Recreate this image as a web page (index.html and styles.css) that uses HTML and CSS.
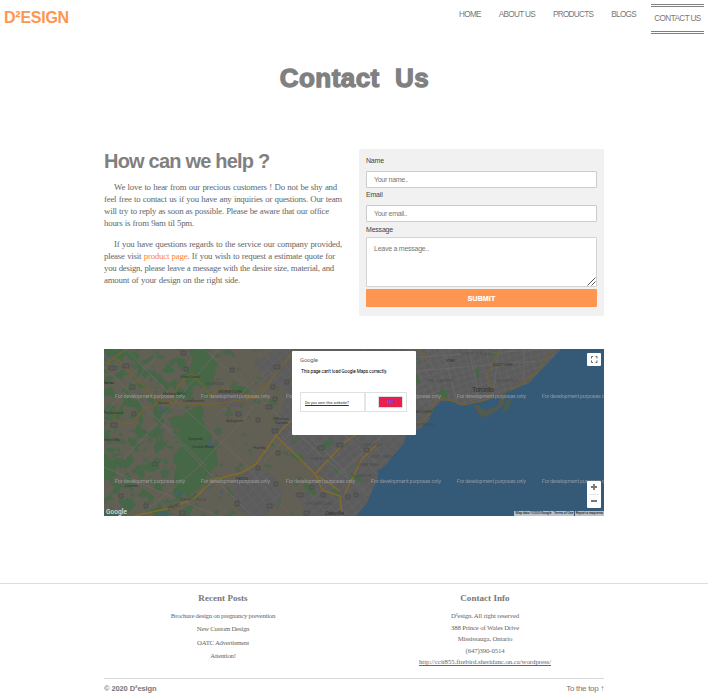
FILE: index.html
```html
<!DOCTYPE html>
<html lang="en">
<head>
<meta charset="utf-8">
<title>Contact Us</title>
<link rel="stylesheet" href="styles.css">
</head>
<body>
<header class="site-header">
  <a class="logo">D²ESIGN</a>
  <nav class="nav">
    <a>HOME</a><a>ABOUT US</a><a>PRODUCTS</a><a>BLOGS</a><a class="active">CONTACT US</a>
  </nav>
</header>
<h1 class="page-title">Contact&nbsp; Us</h1>
<main class="container">
  <section class="contact">
    <div class="intro">
      <h2>How can we help ?</h2>
      <p><span class="l1">We love to hear from our precious customers ! Do not be shy and</span><span class="l2">feel free to contact us if you have any inquiries or questions. Our team</span><span class="l3">will try to reply as soon as possible. Please be aware that our office</span><span class="l4">hours is from 9am til 5pm.</span></p>
      <p><span class="l5">If you have questions regards to the service our company provided,</span><span class="l6">please visit <a>product page</a>. If you wish to request a estimate quote for</span><span class="l7">you design, please leave a message with the desire size, material, and</span><span class="l8">amount of your design on the right side.</span></p>
    </div>
    <form class="form">
      <label for="name">Name</label>
      <input id="name" type="text" placeholder="Your name..">
      <label for="email">Email</label>
      <input id="email" type="text" placeholder="Your email..">
      <label for="message" class="last">Message</label>
      <div class="area">
        <textarea id="message" placeholder="Leave a message.."></textarea>
        <svg class="grip" viewBox="0 0 9 9"><path d="M.5 8.500l8-8M4.500 8.500l4-4" stroke="#555" fill="none"/></svg>
      </div>
      <button type="button">SUBMIT</button>
    </form>
  </section>
  <section class="map">
    <svg class="tiles" width="500" height="167" viewBox="0 0 500 167">
      <defs>
        <filter id="woods" x="0" y="0" width="100%" height="100%" color-interpolation-filters="sRGB">
          <feTurbulence type="fractalNoise" baseFrequency=".1" numOctaves="3" seed="8"/>
          <feColorMatrix values="0 0 0 0 .275  0 0 0 0 .405  0 0 0 0 .28  12 0 0 0 -6" result="n"/>
          <feComposite in="n" in2="SourceAlpha" operator="in"/>
        </filter>
        <filter id="sparse" x="0" y="0" width="100%" height="100%" color-interpolation-filters="sRGB">
          <feTurbulence type="fractalNoise" baseFrequency=".1" numOctaves="3" seed="21"/>
          <feColorMatrix values="0 0 0 0 .29  0 0 0 0 .39  0 0 0 0 .29  12 0 0 0 -7.700" result="n"/>
          <feComposite in="n" in2="SourceAlpha" operator="in"/>
        </filter>
        <pattern id="grid" width="8" height="7" patternUnits="userSpaceOnUse" patternTransform="rotate(-40)"><path d="M0 0H8M0 0V7" stroke="#6b6b6c" stroke-width=".6" fill="none"/></pattern>
        <pattern id="city" width="7" height="6" patternUnits="userSpaceOnUse" patternTransform="rotate(-17)"><path d="M0 0H7M0 0V6" stroke="#6e6e6f" stroke-width=".6" fill="none"/></pattern>
      </defs>
      <rect width="500" height="167" fill="#625f55"/>
      <path d="M0 0H120L108 40 98 70 110 90 115 120 96 150 85 167H0z" filter="url(#woods)"/>
      <path d="M105 0H350V167H80z" filter="url(#sparse)"/>
      <g fill="#5d5c5d">
        <path d="M152 14L172 0H460V167H205L195 150 213 129 187 102 168 84 177 62 183 38 162 34z"/>
        <path d="M130 129l19-9 20 5 10 22-18 20h-19l-12-18zM112 45l18-5 13 10-9 8-20-2z"/>
      </g>
      <path d="M152 14L172 0H350L290 167H205L195 150 213 129 187 102 168 84 177 62 183 38 162 34zM130 129l19-9 20 5 10 22-18 20h-19l-12-18z" fill="url(#grid)"/>
      <path d="M300 0h175l-50 45-80 15-45-5z" fill="url(#city)"/>
      <g fill="#466847">
        <path d="M80 64l12-5 5 13 9 10-1 14 7 5 2 15-11 9-8 15-13 7-11-11 3-14-3-17 7-8-4-13zM90 0l15 3 7 20-8 18-8-6-12 5-4-11 8-15zM64 69l13-3 5 9-12 5zM32 118l15-4 10 5-9 4zM126 36l22 3-5 6-16-2zM0 103l10 9 3 15-13 5zM20 0l16 5-2 10-10-6zM10 60l12 3-14 9-8-2z"/>
        <path d="M337 40l6 1 1 6-5 4-5-6zM374 16l2 12-3 3-1-10zM389 2l9 1-10 5zM311 23l5 9-4 5zM327 62l7-6-4 11zM313 5l3 8-2 4zM188 101l12 7 0 5-14-6zM214 98l12-8 4 3-12 10zM243 124l14 4 4 5-13-2zM202 133l11 10-3 4-11-9zM227 140l9 3-4 7zM165 50l9 4-8 4zM229 117l6 6-3 3zM186 86l8 6-3 3z"/>
      </g>
      <g fill="none" stroke="#6e6b65" stroke-width=".7">
        <path d="M0 18l55 54 43 45 50 50M22 0l55 57 60 54 50 56M100 0l50 44 70 65 45 38M0 65l35-38 25-27M20 110l50-55 45-55M35 167l55-45 50-52 50-70M0 118l75 33 40 16M60 75l42 42M112 67l52-46M160 112l50-52 50-60M200 158l85-78M187 70l75 72M218 65l55 50"/>
        <path d="M312 8l138-8M312 22l120-10M340 0l12 50M365 0l10 48M395 0l-6 45M420 0v28"/>
      </g>
      <g fill="none" stroke="#74632f" stroke-width="1.300" stroke-linejoin="round">
        <path d="M2 15l20-15M13 10l43 43-17 8-10 13-9 1-11-6 7-13M63 56l13-21 12-10 19 21 12-8 32 11 40-48M56 53l48 3 47-7"/>
        <path d="M30 167l36-8 24-9 12-12 10-8 25-6 15-9 19-27 14-15h15M171 86l18 17 23 23 6 15 18 6M236 147l2 20M212 124l11-12 18-19 18-12 20 2M214 127l22 15M273 95l-15 15-17 34" stroke="#846b2a" stroke-width="1.500"/>
        <path d="M314 76l12-13 4-9 8-5 14 4 9 3 20-5 20-5 17-12 15-10 16-24M390 43l-7-17 5-10 8-16" stroke-width="1.100"/>
        <path d="M311 0l12 5v9" stroke-width=".8"/>
      </g>
      <path d="M457 0L445 13 437 21 425 34 413 39 395 47 378 53 357 57 347 52H337L330 59 325 71 317 79 302 86 300 94 290 106 282 116 274 122 273 131 268 142 263 154 252 167H500V0z" fill="#355a78"/>
      <path d="M369 56l6 0 4 7 7-4 7-1 3-10 9-8-4 9-1 7-8 6-11 6-5-1z" fill="#57584f"/>
      <path d="M375 57l4 9 6-3M385 63l8-5M408 49l-3 12-7 3 4-12z" fill="#455f52"/>
      <path d="M56 58l3 4M107 91l-1 8M73 146l6-2M116 142l3 3M47 30l1 2M2 8l4-2M109 136l-4 4M56 164l12 1" fill="none" stroke="#35608a" stroke-width="1.300"/>
      <path d="M77 2h5v4h-5zM5 17h6v4H5zM19 15h6v4h-6zM80 18h4v4h-4zM126 19h4v4h-4zM170 16h6v4h-6zM26 36h5v4h-5zM167 36h4v4h-4zM181 31h4v4h-4zM169 48h4v4h-4zM28 63h4v4h-4zM7 74h6v4H7zM132 63h5v4h-5zM152 69h4v4h-4zM168 80h6v4h-6zM162 56h6v4h-6zM172 102h4v4h-4zM152 117h4v4h-4zM49 113h4v4h-4zM170 133h4v4h-4zM15 145h4v4h-4zM40 155h4v4h-4zM131 152h4v5h-4zM163 155h5v4h-5zM76 162h5v4h-5zM214 97h6v4h-6zM233 94h6v4h-6zM260 99h5v4h-5zM206 136h4v4h-4zM193 144h6v4h-6zM217 144h4v4h-4zM242 146h4v4h-4zM250 144h4v4h-4zM200 162h5v4h-5z" fill="#5b5a59" stroke="#464544" stroke-width=".6"/>
      <g class="places">
        <text x="76" y="29" textLength="20">Silver Creek</text><text x="102" y="36" textLength="18" class="area-name">WILDWOOD</text><text x="59" y="46" textLength="22">Halton Hills</text><text x="114" y="44" textLength="24">GEORGETOWN</text><text x="54" y="55" textLength="11">Acton</text><text x="79" y="53" textLength="21">Limehouse</text><text x="0" y="35" textLength="10">Eramosa</text><text x="0" y="65" textLength="19">Rockwood</text><text x="122" y="73" textLength="17">Ashgrove</text><text x="169" y="71" textLength="16">Whaleys</text><text x="171" y="75" textLength="13">Corners</text><text x="84" y="91" textLength="15">Speyside</text><text x="88" y="99" textLength="22">Scotch Block</text><text x="149" y="100" textLength="13">Hornby</text><text x="0" y="92" textLength="16">Eden Mills</text><text x="21" y="138" textLength="13">Corwhin</text><text x="132" y="131" textLength="12">MILTON</text><text x="73" y="152" textLength="29" class="area-name">CAMPBELLVILLE</text><text x="64" y="160" textLength="13" transform="rotate(-14 64 160)">Hwy 401</text>
        <text x="357" y="6" textLength="31" class="area-name">NORTH TORONTO</text><text x="342" y="13" textLength="9">YORK</text><text x="389" y="17" textLength="20">EAST YORK</text><text x="323" y="33" textLength="26" class="area-name">THE JUNCTION</text><text x="392" y="33" textLength="22" class="area-name">LESLIEVILLE</text><text x="368" y="43" textLength="22" class="city">Toronto</text><text x="303" y="64" textLength="25">ETOBICOKE</text><text x="309" y="77" textLength="23" class="area-name">NEW TORONTO</text><text x="257" y="97" textLength="22" class="area-name">COOKSVILLE</text><text x="206" y="111" textLength="20" class="area-name">ERIN MILLS</text><text x="267" y="109" textLength="25" class="area-name">PORT CREDIT</text><text x="253" y="117" textLength="22" class="area-name">LORNE PARK</text><text x="248" y="128" textLength="19" class="area-name">CLARKSON</text><text x="202" y="156" textLength="26" class="area-name">UPTOWN CORE</text><text x="221" y="166" textLength="19" class="city small">Oakville</text>
      </g>
      <g class="watermark">
        <text x="11" y="49" textLength="70">For development purposes only</text><text x="97" y="49" textLength="69">For development purposes only</text><text x="182" y="49" textLength="69">For development purposes only</text><text x="267" y="49" textLength="70">For development purposes only</text><text x="353" y="49" textLength="69">For development purposes only</text><text x="438" y="49" textLength="69">For development purposes only</text>
        <text x="11" y="134" textLength="70">For development purposes only</text><text x="97" y="134" textLength="69">For development purposes only</text><text x="182" y="134" textLength="69">For development purposes only</text><text x="267" y="134" textLength="70">For development purposes only</text><text x="353" y="134" textLength="69">For development purposes only</text><text x="438" y="134" textLength="69">For development purposes only</text>
      </g>
      <text x="2" y="164.500" textLength="21" class="google">Google</text>
    </svg>
    <div class="dialog">
      <div class="brand">Google</div>
      <div class="msg">This page can't load Google Maps correctly.</div>
      <div class="actions"><div class="own"><a>Do you own this website?</a></div><div class="okcell"><span class="ok">OK</span></div></div>
    </div>
    <div class="full"><svg width="14" height="13" viewBox="0 0 14 13"><path d="M4.500 5.500V3.500H6M8.500 3.500h1.500v2M4.500 7.500v2H6M8.500 9.500h1.500v-2" fill="none" stroke="#666" stroke-width="1"/></svg></div>
    <div class="zoomer"><svg width="14" height="27" viewBox="0 0 14 27"><path d="M4 6h6M7 3v6M4 20h6" stroke="#777" stroke-width="1.800"/><path d="M2 13.500h10" stroke="#e4e4e4"/></svg></div>
    <div class="credits"><span class="c1">Map data ©2020 Google</span><span class="c2">Terms of Use</span><span class="c3">Report a map error</span></div>
  </section>
</main>
<footer class="footer">
  <div class="container">
    <div class="columns">
      <div class="posts"><h3>Recent Posts</h3><a>Brochure design on pregnancy prevention</a><a>New Custom Design</a><a>OATC Advertisment</a><a>Attention!</a></div>
      <div class="info"><h3>Contact Info</h3><p>D²esign. All right reserved</p><p>388 Prince of Wales Drive</p><p>Mississauga, Ontario</p><p>(647)390-0514</p><p><a>http://ccit855.firebird.sheridanc.on.ca/wordpress/</a></p></div>
    </div>
    <div class="bottom"><span class="copy">© 2020 D²esign</span><a class="top">To the top ↑</a></div>
  </div>
</footer>
</body>
</html>
```
FILE: styles.css
```css
* { box-sizing: border-box; }
html, body { margin: 0; height: 696px; overflow: hidden; }
body { font-family: "Liberation Serif", serif; color: #777; background: #fff; }
h1, h2, h3, p { margin: 0; }
.site-header { height: 40px; padding: 4px 4px 0; display: flex; justify-content: space-between; font-family: "Liberation Sans", sans-serif; }
.logo { font-size: 16px; font-weight: bold; line-height: 28px; letter-spacing: -.25px; color: #ff964f; }
.nav { display: flex; gap: 18px; font-size: 8.200px; letter-spacing: -.7px; line-height: 22px; color: #777; white-space: nowrap; }
.nav .active { margin-left: -3px; width: 53px; height: 30px; border: solid gray; border-width: 3px 0; border-style: double; text-align: center; line-height: 23px; letter-spacing: -.6px; }
.page-title { height: 76px; margin-top: 0; padding-left: 1px; line-height: 76px; text-align: center; font-family: "Liberation Sans", sans-serif; font-size: 26px; font-weight: 900; letter-spacing: .45px; color: gray; -webkit-text-stroke: 1.300px gray; }
.container { width: 500px; margin: 0 auto; }
.contact { margin-top: 33px; display: flex; justify-content: space-between; height: 167px; }
.intro { width: 240px; white-space: nowrap; }
.intro h2 { font-family: "Liberation Sans", sans-serif; font-size: 20px; line-height: 24px; letter-spacing: -.8px; color: gray; }
.intro p { font-size: 8.800px; letter-spacing: -.21px; line-height: 12px; margin: 8px 0 9px; color: #666; }
.intro p + p { margin-top: 0; }
.intro p span { display: block; white-space: normal; height: 12px; text-align-last: justify; }
.intro p a { color: #ff8336; }
.intro .l1 { width: 223px; margin-left: 10px; }
.intro .l2 { width: 238px; }
.intro .l3 { width: 225px; }
.intro .l4 { width: 90px; }
.intro .l5 { width: 228px; margin-left: 10px; }
.intro .l6 { width: 231px; }
.intro .l7 { width: 230px; letter-spacing: -.23px; }
.intro .l8 { width: 136px; }
.form { width: 245px; padding: 5px 7px; background: #f1f1f1; border-radius: 2px; font-family: "Liberation Sans", sans-serif; }
.form label { display: block; height: 17px; font-size: 7px; line-height: 13px; letter-spacing: -.2px; color: #444; }
.form label.last { height: 15px; line-height: 15px; }
.form input { display: block; width: 231px; height: 17px; border: 1px solid #ccc; padding: 0 7px; font: 7px "Liberation Sans", sans-serif; letter-spacing: -.3px; border-radius: 1px; }
.form ::placeholder { color: #777; }
.area { position: relative; height: 50px; }
.area textarea { display: block; width: 231px; height: 50px; resize: none; border: 1px solid #d4d4d4; padding: 7px; font: 7px "Liberation Sans", sans-serif; letter-spacing: -.25px; border-radius: 1px; }
.grip { position: absolute; right: 1px; bottom: 1px; width: 9px; height: 9px; }
.form button { display: block; width: 231px; height: 18px; margin-top: 2px; border: 0; padding: 0; border-radius: 1px; background: #ff964f; color: #fff; font: bold 7px "Liberation Sans", sans-serif; letter-spacing: .15px; -webkit-text-stroke: .2px #fff; }
.map { position: relative; height: 167px; margin-top: 33px; overflow: hidden; font-family: Roboto, sans-serif; }
.tiles { display: block; }
.places text { font: 4.300px Roboto, sans-serif; fill: #383837; }
.places .area-name { font-size: 3.300px; fill: #484848; }
.places .city { font-size: 7px; fill: #303030; }
.places .small { font-size: 5.500px; }
.watermark text { font: 5.500px Roboto, sans-serif; fill: #aaa; opacity: .75; }
.google { font: 500 6.500px Roboto, sans-serif; fill: #ddd; }
.dialog { position: absolute; left: 188px; top: 2px; width: 124px; height: 84px; padding: 5px 8px; background: #fff; border-radius: 1px; white-space: nowrap; }
.brand { font-size: 6px; line-height: 8px; letter-spacing: -.2px; color: #666; }
.msg { margin-top: 4px; font-size: 4.700px; line-height: 8px; color: #000; letter-spacing: -.1px; padding-left: 1px; }
.actions { display: flex; width: 107px; height: 20px; margin-top: 16px; border: 1px solid #e0e0e0; }
.own { width: 65px; border-right: 2px solid #e6e6e6; padding-left: 4px; font-size: 3.900px; line-height: 19px; }
.own a { color: #333; text-decoration: underline; text-decoration-thickness: 1px; }
.okcell { flex: 1; padding: 3px 0 0 12px; }
.ok { display: block; width: 25px; height: 12px; line-height: 10px; border: 1px solid #ddd; background: #e9204f; color: #6a4dff; font-size: 5px; font-weight: bold; text-align: center; }
.full, .zoomer { position: absolute; right: 3px; background: #fff; line-height: 0; border-radius: 1px; }
.full { top: 4px; }
.zoomer { top: 132px; }
.credits { position: absolute; right: 0; bottom: 0; display: flex; height: 5px; font-size: 3.400px; line-height: 5px; color: #000; white-space: nowrap; background: #b5c0c9; }
.credits span { text-align: center; letter-spacing: -.05px; }
.c1 { width: 39px; }
.c2 { width: 22px; border-right: 1px solid #345a78; }
.c3 { width: 29px; }
.footer { margin-top: 67px; border-top: 1px solid #ddd; }
.columns { display: flex; justify-content: space-between; height: 94px; padding-top: 8px; text-align: center; font-size: 6.800px; white-space: nowrap; color: #666; }
.posts, .info { width: 238px; }
.columns h3 { font-size: 9px; line-height: 12px; margin-bottom: 5px; color: #777; letter-spacing: .05px; }
.posts a { display: block; line-height: 13.300px; letter-spacing: -.25px; }
.info p { line-height: 11.500px; letter-spacing: -.15px; }
.info p:last-child { letter-spacing: -.04px; }
.info h3 { margin-bottom: 6px; }
.info a { text-decoration: underline; }
.bottom { display: flex; justify-content: space-between; border-top: 1px solid #d8d8d8; font: 8px/19px "Liberation Sans", sans-serif; }
.copy { font-weight: bold; font-size: 7.500px; letter-spacing: -.1px; }
.top { letter-spacing: -.3px; }
```
